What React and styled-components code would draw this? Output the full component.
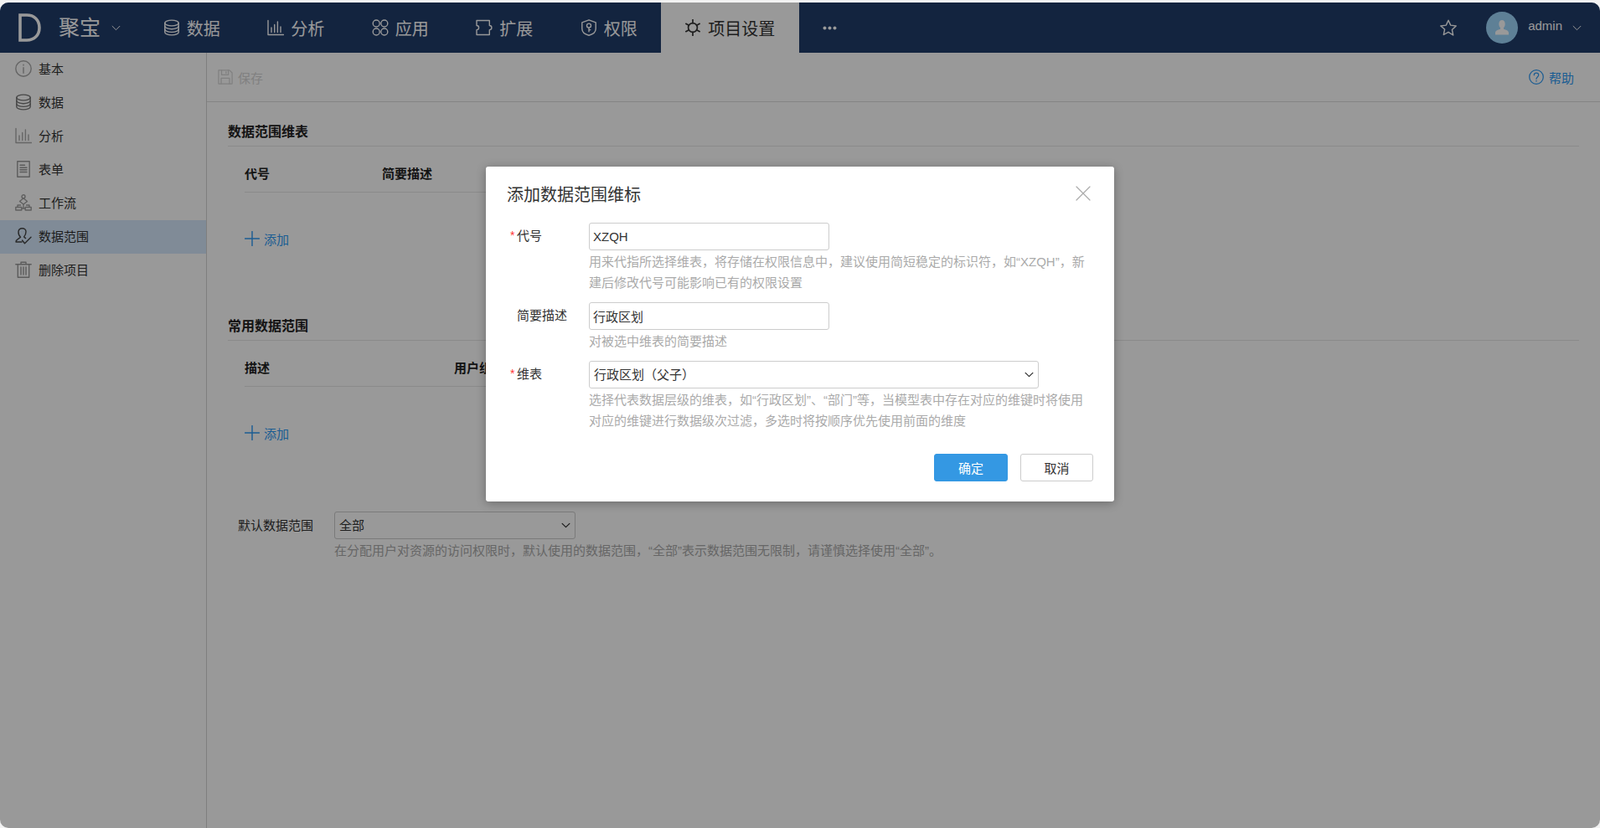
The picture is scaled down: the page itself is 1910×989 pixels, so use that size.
import React from "react";
import styled, { createGlobalStyle } from "styled-components";

const Global = createGlobalStyle`
  html, body { margin: 0; padding: 0; background: #f2f2f2; }
  body { font-family: "Liberation Sans", "Noto Sans CJK SC", sans-serif; font-size: 15px; color: #222; overflow: hidden; }
  * { box-sizing: border-box; }
`;

const Window = styled.div`
  position: relative; margin-top: 3px; height: 986px; overflow: hidden;
  border-radius: 10px; background: #fff; display: flex; flex-direction: column;
`;
const Header = styled.header`
  height: 60px; flex: none; background: #213c6a; color: #fff; display: flex; align-items: stretch;
`;
const Brand = styled.div`
  width: 166.5px; flex: none; display: flex; align-items: center; padding-left: 22px;
`;
const BrandName = styled.span`
  margin-left: 21px; font-size: 25px; line-height: 60px; margin-right: 13px; white-space: nowrap;
`;
const NavItem = styled.div`
  display: flex; align-items: center; gap: 8px; padding: 0 28.25px; font-size: 20px; white-space: nowrap;
  background: ${(p) => (p.$active ? "#fff" : "transparent")};
  color: ${(p) => (p.$active ? "#333" : "#fff")};
`;
const UserArea = styled.div`
  margin-left: auto; display: flex; align-items: center; padding-right: 22px;
`;
const Avatar = styled.div`
  width: 38px; height: 38px; border-radius: 50%; background: #9dd6fb; margin-left: 35px; margin-right: 12px;
  display: flex; align-items: center; justify-content: center; overflow: hidden;
`;
const UserName = styled.span`
  font-size: 15px; margin-right: 12px; margin-bottom: 5px;
`;
const Body = styled.div`
  flex: 1; display: flex; min-height: 0;
`;
const Sidebar = styled.aside`
  width: 247px; flex: none; border-right: 1px solid #d4d4d4;
`;
const SideItem = styled.div`
  height: 40px; display: flex; align-items: center; gap: 8px; padding: 0 0 3px 18px; font-size: 15px; color: #333;
  background: ${(p) => (p.$active ? "#d5e8fc" : "transparent")};
`;
const Main = styled.main`
  flex: 1; min-width: 0; display: flex; flex-direction: column;
`;
const Toolbar = styled.div`
  height: 59px; flex: none; border-bottom: 1px solid #dcdcdc; display: flex; align-items: center;
  justify-content: space-between; padding: 0 31px 0 13px;
`;
const ToolButton = styled.div`
  display: flex; align-items: center; gap: 6px; color: ${(p) => p.$color}; font-size: 15px;
`;
const Content = styled.div`
  padding: 21px 25px 0 25px;
`;
const Section = styled.section`
  margin-bottom: 74px;
`;
const SectionTitle = styled.h3`
  margin: 0; font-size: 16px; font-weight: 700; line-height: 28px; padding: 1px 0 2px; color: #222;
  border-bottom: 1px solid #e6e6e6;
`;
const TableHead = styled.div`
  margin-left: 20px; width: 760px; height: 55px; padding-top: 8px; display: flex; align-items: center;
  border-bottom: 1px solid #e6e6e6; font-weight: 700; font-size: 15px; color: #222;
`;
const HeadCell = styled.div`
  width: ${(p) => p.$w}px; flex: none; white-space: nowrap;
`;
const AddLink = styled.div`
  margin: 39px 0 0 20px; height: 32px; display: flex; align-items: center; gap: 5px; color: #2f9bf5; font-size: 15px;
`;
const DefaultRow = styled.div`
  display: flex; margin: 78px 0 0 12px;
`;
const DefaultLabel = styled.div`
  width: 115px; flex: none; line-height: 33px; font-size: 15px; color: #333; white-space: nowrap;
`;
const FieldColumn = styled.div`
  min-width: 0; width: ${(p) => p.$w || 600}px;
`;
const Select = styled.div`
  height: 33px; width: ${(p) => p.$w}px; border: 1px solid #ccc; border-radius: 3px; background: #fff;
  display: flex; align-items: center; justify-content: space-between; padding: 0 5px; font-size: 15px; color: #333;
`;
const SelectValue = styled.span`
  margin-bottom: 2px;
`;
const Hint = styled.div`
  margin-top: 1px; line-height: 25px; font-size: 15px; color: #aaa; white-space: ${(p) => (p.$nowrap ? "nowrap" : "normal")};
`;
const Mask = styled.div`
  position: absolute; inset: 0; background: rgba(0,0,0,.4); display: flex; justify-content: center; padding-top: 196px;
`;
const Dialog = styled.div`
  width: 750px; height: 400px; background: #fff; border-radius: 3px; box-shadow: 0 2px 12px rgba(0,0,0,.3);
  display: flex; flex-direction: column;
`;
const DialogHeader = styled.div`
  height: 67px; flex: none; display: flex; align-items: center; justify-content: space-between; padding: 0 27px 2px 25px;
`;
const DialogTitle = styled.h2`
  margin: 0; font-size: 20px; font-weight: 400; color: #333;
`;
const CloseButton = styled.div`
  margin-bottom: 2px; color: #aaa;
`;
const FieldRow = styled.div`
  display: flex; padding-left: 29px; margin-bottom: 11px;
`;
const FieldLabel = styled.div`
  width: 94px; flex: none; display: flex; height: 33px; line-height: 31px; font-size: 15px; color: #333;
`;
const Star = styled.span`
  width: 8px; flex: none; color: #f33; font-size: 14px; line-height: 30px;
`;
const TextInput = styled.input`
  display: block; width: 287px; height: 33px; border: 1px solid #ccc; border-radius: 3px; padding: 0 4px;
  font: inherit; font-size: 15px; color: #333; background: #fff; outline: none;
`;
const Footer = styled.div`
  margin-top: 16px; padding-right: 25px; display: flex; justify-content: flex-end; gap: 15px;
`;
const Button = styled.div`
  width: ${(p) => p.$w}px; height: 33px; border-radius: 3px; display: flex; align-items: center; justify-content: center;
  font-size: 15px; border: 1px solid ${(p) => (p.$primary ? "#3498e3" : "#ccc")};
  background: ${(p) => (p.$primary ? "#3498e3" : "#fff")}; color: ${(p) => (p.$primary ? "#fff" : "#333")};
`;
const Svg = styled.svg`
  flex: none; display: block; fill: none; stroke: ${(p) => p.$color || "currentColor"};
  stroke-width: ${(p) => p.$sw || 1.4}; stroke-linecap: round; stroke-linejoin: round;
`;
const LogoSvg = styled(Svg)`
  stroke-linecap: butt; stroke-linejoin: miter;
`;
const DotsSvg = styled.svg`
  display: block; fill: currentColor;
`;
const PersonSvg = styled.svg`
  display: block; fill: #fff;
`;

const paths = {
  db: <><ellipse cx="10" cy="4.5" rx="8.2" ry="3.4"/><path d="M1.8 4.5v11c0 1.9 3.7 3.4 8.2 3.4s8.2-1.5 8.2-3.4v-11"/><path d="M1.8 8.3c0 1.9 3.7 3.4 8.2 3.4s8.2-1.5 8.2-3.4M1.8 12c0 1.9 3.7 3.4 8.2 3.4s8.2-1.5 8.2-3.4"/></>,
  bars: <path d="M1 1.5v17h18.5M5 10v5.5M8.7 6.5v9M12.4 3v12.5M16 9v6.5"/>,
  apps: <><circle cx="5.2" cy="5" r="4"/><circle cx="14.8" cy="5" r="4"/><circle cx="5.2" cy="15" r="4"/><circle cx="14.8" cy="15" r="4"/></>,
  ext: <path d="M1 1.5h15.3v6a2.6 2.6 0 0 1 0 5.2v5.8H1v-5.8a2.6 2.6 0 0 0 0-5.2z"/>,
  shield: <><path d="M10 .8l8.2 3v7.4c0 3.8-3.6 6.8-8.2 8C5.4 18 1.8 15 1.8 11.2V3.8z"/><circle cx="10" cy="7.6" r="2.5"/><path d="M10 10.1v4.6M10 12.6h1.8"/></>,
  gear: <><circle cx="10" cy="10" r="5.4"/><path d="M10 .5v4.100M10 15.400v4.100M1.800 5.300l3.500 2M14.700 12.700l3.500 2M18.200 5.300l-3.500 2M5.300 12.700l-3.500 2"/></>,
  star: <path d="M10 1.200l2.700 5.900 6.500.9-4.800 4.500 1.300 6.500L10 15.300l-5.700 3.200 1.300-6.500L.8 8l6.500-.9z"/>,
  info: <><circle cx="10" cy="10" r="9.200"/><path d="M10 8.800v6.500"/><path d="M10 5.200v.8"/></>,
  doc: <><path d="M2.800 .8h14.400v18.400H2.800z"/><path d="M6 5.200h5.500M6 8.200h8M6 10.800h8M6 13.500h8"/></>,
  flow: <><circle cx="10" cy="2.800" r="2"/><path d="M10 4.800L5.500 8.500 10 12l4.500-3.500z"/><path d="M3 15v-2h3.500M13.500 13H17v2"/><path d="M.8 15.500h7v3.500h-7zM12.200 15.500h7v3.500h-7z"/><path d="M10 12v5h-2.200M10 17h2.200"/></>,
  user: <path d="M8 17H1c0-3 4-4 5.500-5.800C4.800 9.500 3.800 7.200 4 4.700 4.300 2 6 .7 8.500.7c2.500 0 4.500 1.700 4.500 4.100 0 2.400-.8 4.400-2.400 6.100.5.700 1.200 1.200 2 1.600M8.500 15l3 3.800 7.500-7.500"/>,
  trash: <><path d="M.8 3.800h18.400M7 3.800V1.200h6v2.600M3.300 3.800v15.400h13.400V3.800"/><path d="M7 7v9M10 7v9M13 7v9"/></>,
  save: <><path d="M1 1h14.500L19 4.500V19H1z"/><path d="M5 1v6h9V1M11 3v2M4.500 19v-7.500h11V19"/></>,
  help: <><circle cx="10" cy="10" r="9.200"/><path d="M7 7.500c0-2 1.400-3 3-3s3 1 3 2.800c0 2.600-3 2.600-3 5.200"/><path d="M10 15v.6"/></>,
  plus: <path d="M10 .5v19M.5 10h19"/>,
  close: <path d="M2 2l16 16M18 2L2 18"/>,
  chevron: <path d="M2 6l8 8 8-8"/>,
};

const Icon = ({ name, size = 20, color, sw }) => (
  <Svg width={size} height={size} viewBox="0 0 20 20" $color={color} $sw={sw}>{paths[name]}</Svg>
);

const Logo = () => (
  <LogoSvg width="27" height="34" viewBox="0 0 27 34" $sw={3.6}>
    <path d="M2 2h8c8.500 0 15 5.500 15 15s-6.500 15-15 15H2z" />
  </LogoSvg>
);
const Dots = () => (
  <DotsSvg width="17" height="5" viewBox="0 0 17 5">
    <circle cx="2.500" cy="2.500" r="2" /><circle cx="8.500" cy="2.500" r="2" /><circle cx="14.500" cy="2.500" r="2" />
  </DotsSvg>
);
const Person = () => (
  <PersonSvg width="20" height="20" viewBox="0 0 20 20">
    <path d="M6.300 5.500C6.300 2.800 7.800 1 10 1s3.700 1.800 3.700 4.500c0 2-.7 3.600-1.700 4.600v1.600c2.500 1 6 1.600 6 4.300v2.500H2V16c0-2.700 3.500-3.300 6-4.300v-1.600c-1-1-1.700-2.600-1.700-4.600z" />
  </PersonSvg>
);

const nav = [["db", "数据"], ["bars", "分析"], ["apps", "应用"], ["ext", "扩展"], ["shield", "权限"]];
const side = [
  ["info", "基本", "#a8a8a8"], ["db", "数据", "#777"], ["bars", "分析", "#aaa"], ["doc", "表单", "#999"],
  ["flow", "工作流", "#a0a0a0"], ["user", "数据范围", "#444"], ["trash", "删除项目", "#999"],
];

export default function App() {
  return (
    <>
      <Global />
      <Window>
        <Header>
          <Brand>
            <Logo />
            <BrandName>聚宝</BrandName>
            <Icon name="chevron" size={11} sw={1.8} />
          </Brand>
          {nav.map(([ic, t]) => (
            <NavItem key={t}><Icon name={ic} />{t}</NavItem>
          ))}
          <NavItem $active><Icon name="gear" color="#333" sw={1.7} />项目设置</NavItem>
          <NavItem><Dots /></NavItem>
          <UserArea>
            <Icon name="star" />
            <Avatar><Person /></Avatar>
            <UserName>admin</UserName>
            <Icon name="chevron" size={11} sw={1.8} />
          </UserArea>
        </Header>
        <Body>
          <Sidebar>
            {side.map(([ic, t, c]) => (
              <SideItem key={t} $active={t === "数据范围"}><Icon name={ic} color={c} />{t}</SideItem>
            ))}
          </Sidebar>
          <Main>
            <Toolbar>
              <ToolButton $color="#d6d6d6"><Icon name="save" size={18} />保存</ToolButton>
              <ToolButton $color="#2f9bf5"><Icon name="help" size={18} />帮助</ToolButton>
            </Toolbar>
            <Content>
              <Section>
                <SectionTitle>数据范围维表</SectionTitle>
                <TableHead><HeadCell $w={164}>代号</HeadCell><HeadCell $w={200}>简要描述</HeadCell></TableHead>
                <AddLink><Icon name="plus" size={18} sw={1.6} />添加</AddLink>
              </Section>
              <Section>
                <SectionTitle>常用数据范围</SectionTitle>
                <TableHead><HeadCell $w={250}>描述</HeadCell><HeadCell $w={200}>用户组</HeadCell></TableHead>
                <AddLink><Icon name="plus" size={18} sw={1.6} />添加</AddLink>
              </Section>
              <DefaultRow>
                <DefaultLabel>默认数据范围</DefaultLabel>
                <FieldColumn $w={288}>
                  <Select $w={288}><SelectValue>全部</SelectValue><Icon name="chevron" size={11} sw={2} color="#222" /></Select>
                  <Hint $nowrap>在分配用户对资源的访问权限时，默认使用的数据范围，“全部”表示数据范围无限制，请谨慎选择使用“全部”。</Hint>
                </FieldColumn>
              </DefaultRow>
            </Content>
          </Main>
        </Body>
        <Mask>
          <Dialog>
            <DialogHeader>
              <DialogTitle>添加数据范围维标</DialogTitle>
              <CloseButton><Icon name="close" size={20} sw={1.2} /></CloseButton>
            </DialogHeader>
            <FieldRow>
              <FieldLabel><Star>*</Star>代号</FieldLabel>
              <FieldColumn>
                <TextInput readOnly value="XZQH" />
                <Hint>用来代指所选择维表，将存储在权限信息中，建议使用简短稳定的标识符，如“XZQH”，新建后修改代号可能影响已有的权限设置</Hint>
              </FieldColumn>
            </FieldRow>
            <FieldRow>
              <FieldLabel><Star />简要描述</FieldLabel>
              <FieldColumn>
                <TextInput readOnly value="行政区划" />
                <Hint>对被选中维表的简要描述</Hint>
              </FieldColumn>
            </FieldRow>
            <FieldRow>
              <FieldLabel><Star>*</Star>维表</FieldLabel>
              <FieldColumn>
                <Select $w={537}><SelectValue>行政区划（父子）</SelectValue><Icon name="chevron" size={11} sw={2} color="#222" /></Select>
                <Hint>选择代表数据层级的维表，如“行政区划”、“部门”等，当模型表中存在对应的维键时将使用对应的维键进行数据级次过滤，多选时将按顺序优先使用前面的维度</Hint>
              </FieldColumn>
            </FieldRow>
            <Footer>
              <Button $primary $w={88}>确定</Button>
              <Button $w={87}>取消</Button>
            </Footer>
          </Dialog>
        </Mask>
      </Window>
    </>
  );
}
